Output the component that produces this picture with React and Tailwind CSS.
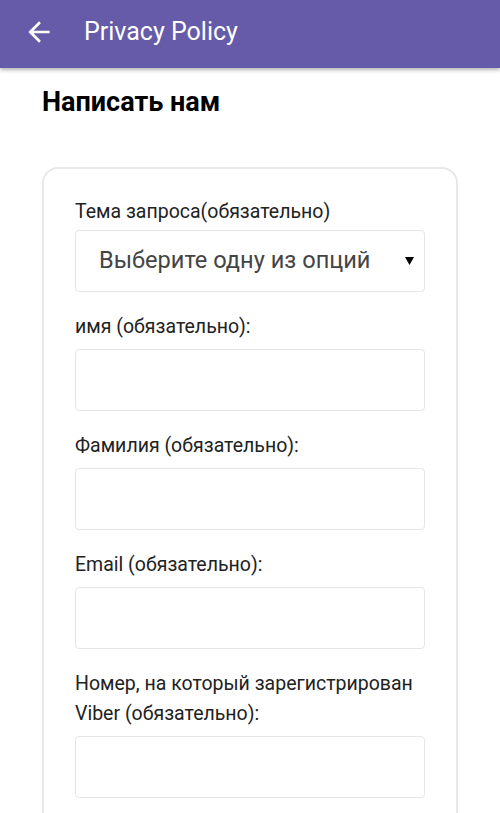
import React from "react";

function Field({ label, children }) {
  return (
    <div className="flex flex-col">
      <label className="text-[19.5px] leading-[30px] text-[#222]">{label}</label>
      {children}
    </div>
  );
}

function TextBox() {
  return <div className="mt-[7px] h-[62px] rounded-[4px] border border-[#e6e6e6] bg-white" />;
}

export default function App() {
  return (
    <div className="min-h-screen bg-white font-['Roboto',sans-serif] overflow-hidden h-[813px]">
      {/* Toolbar */}
      <div className="flex h-[68px] items-center bg-[#655ba9] pb-[4px] shadow-[0_2px_4px_rgba(0,0,0,0.3)]">
        <svg className="ml-[23px]" width="32" height="32" viewBox="0 0 24 24" fill="#fff">
          <path d="M20 11H7.83l5.59-5.59L12 4l-8 8 8 8 1.41-1.41L7.83 13H20v-2z" />
        </svg>
        <span className="ml-[29px] text-[25px] text-white">Privacy Policy</span>
      </div>

      <div className="px-[42px]">
        <h1 className="mt-[17px] text-[27px] font-bold leading-[34px] text-black">Написать нам</h1>

        {/* Form card */}
        <div className="mt-[48px] rounded-[16px] border-2 border-[#e8e8e8] px-[31px] pt-[28px] pb-8">
          <Field label="Тема запроса(обязательно)">
            <div className="mt-[3px] flex h-[62px] items-center rounded-[4px] border border-[#e6e6e6] bg-white pl-[23px] pr-[9px]">
              <span className="flex-1 text-[23.6px] text-[#444]">Выберите одну из опций</span>
              <svg width="9" height="8" viewBox="0 0 9 8" className="mr-[1px]">
                <path d="M0 0h9L4.5 8z" fill="#000" />
              </svg>
            </div>
          </Field>
          <div className="mt-[20px]">
            <Field label="имя (обязательно):">
              <TextBox />
            </Field>
          </div>
          <div className="mt-[20px]">
            <Field label="Фамилия (обязательно):">
              <TextBox />
            </Field>
          </div>
          <div className="mt-[20px]">
            <Field label="Email (обязательно):">
              <TextBox />
            </Field>
          </div>
          <div className="mt-[20px]">
            <Field label="Номер, на который зарегистрирован Viber (обязательно):">
              <TextBox />
            </Field>
          </div>
        </div>
      </div>
    </div>
  );
}
